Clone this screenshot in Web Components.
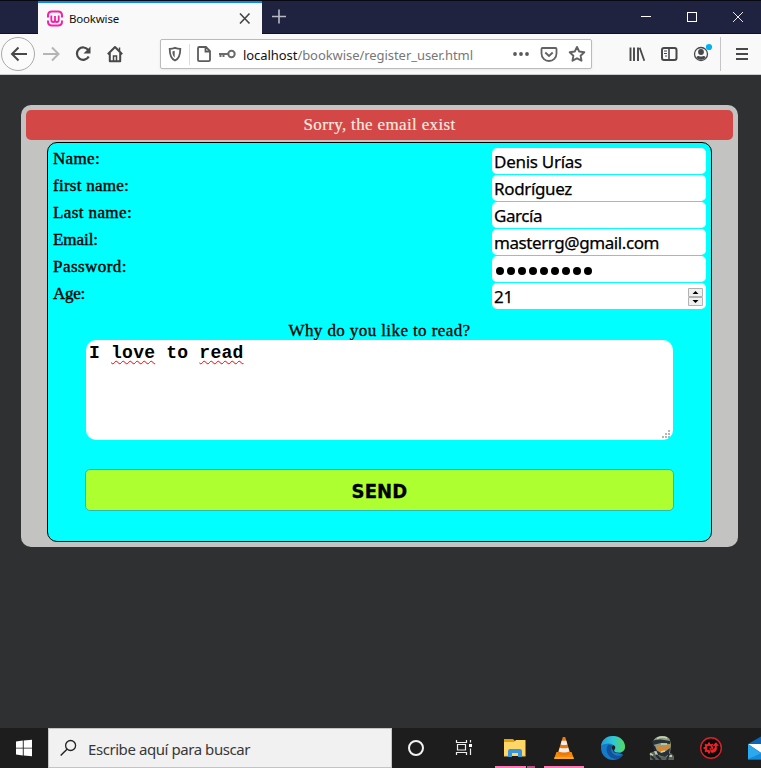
<!DOCTYPE html>
<html lang="en"><head><meta charset="utf-8"><title>Bookwise</title>
<style>html,body{margin:0;height:100%;overflow:hidden;background:#2f3032}</style></head><body>
<book-desktop></book-desktop>
<script>
const define=(name,html,ready)=>customElements.define(name,class extends HTMLElement{
 constructor(){super();this.attachShadow({mode:'open'}).innerHTML=html}
 connectedCallback(){if(ready)ready(this)}
});
const icons={
back:'<path d="M25 16H10.500M16.500 9.500L10 16l6.500 6.500" stroke-width="2"/>',
forward:'<path d="M8 16h15M17 9.500l6.500 6.500-6.500 6.500" stroke-width="2" stroke="#b5b5b7"/>',
reload:'<path d="M21.300 12.200A6.200 6.200 0 1 0 21.700 18.400" stroke-width="2.200"/><path d="M23.500 8.500v7h-7z" fill="#48484a" stroke="none"/>',
home:'<path d="M8.800 16.300L16 9l7.200 7.300M10.800 15v8.200h10.400V15" stroke-width="2" stroke-linejoin="round"/><path d="M14.500 23v-5h3v5M20.500 9.500v4" stroke-width="1.500"/>',
shield:'<path d="M16 9.800c2 .8 4 1.100 5.300 1.100 0 5.500-.7 9.500-5.300 11.600-4.600-2.100-5.300-6.100-5.300-11.600 1.300 0 3.300-.3 5.300-1.100z" stroke="#5c5c5e" stroke-width="1.800"/><path d="M15.700 12.700v6.800c-1.500-1-2.200-2.800-2.300-6z" fill="#5c5c5e" stroke="none"/>',
page:'<path d="M12 9h6l4 4v9a1.200 1.200 0 0 1-1.200 1.200H11.200A1.200 1.200 0 0 1 10 22V10.200A1.200 1.200 0 0 1 11.200 9zM17.500 9.500v4H22" stroke="#5c5c5e" stroke-width="1.800"/>',
key:'<g stroke="#6a6a6c"><circle cx="20.500" cy="16" r="3.200" stroke-width="2"/><path d="M17 16H8M9.500 16v3M12.500 16v3" stroke-width="2"/></g>',
dots:'<g fill="#59595b" stroke="none"><circle cx="10" cy="16" r="1.900"/><circle cx="16" cy="16" r="1.900"/><circle cx="22" cy="16" r="1.900"/></g>',
pocket:'<path d="M9.500 10h13a1 1 0 0 1 1 1v4.500a7.400 7.400 0 0 1-15 0V11a1 1 0 0 1 1-1z" stroke="#626264" stroke-width="1.800"/><path d="M12.300 14.500l3.700 3.400 3.700-3.400" stroke="#626264" stroke-width="1.900"/>',
star:'<path d="M16 8.900l2.200 4.600 5.100.7-3.700 3.500.9 5-4.500-2.400-4.500 2.400.9-5-3.700-3.500 5.100-.7z" stroke="#626264" stroke-width="1.900" stroke-linejoin="round"/>',
library:'<path d="M9.500 9.500v13.500M13 9.500v13.500M17 9.500v13.500" stroke-width="1.900"/><path d="M18.700 9.800l4.600 13" stroke-width="1.800"/>',
sidebar:'<rect x="9" y="10" width="14.500" height="12" rx="2" stroke-width="2"/><path d="M16 10v12" stroke-width="1.600"/><path d="M11 13h3M11 15.500h3M12 18h2" stroke-width="1"/>',
account:'<circle cx="16" cy="16" r="6.500" stroke-width="1.300"/><circle cx="16" cy="14" r="2.900" fill="#48484a" stroke="none"/><path d="M11.300 19.500q.5-1.400 2.500-1.400 2.200 1 4.400 0 2 0 2.500 1.400c-2.200 3-7.200 3-9.400 0z" fill="#48484a" stroke="none"/><circle cx="24" cy="9" r="3.100" fill="#00b3f4" stroke="none"/>',
menu:'<path d="M10 11h12M10 16h12M10 21h12" stroke-width="2"/>',
close:'<path d="M11 10.500l9.500 10M20.500 10.500L11 20.500" stroke="#444" stroke-width="1.600"/>',
plus:'<path d="M9 15.500h14M16 8.500v14" stroke="#b8b9c6" stroke-width="1.600"/>',
min:'<path d="M11 15.500h10" stroke="#fff" stroke-width="1"/>',
max:'<rect x="11.500" y="11.500" width="9" height="9" stroke="#fff" stroke-width="1"/>',
exit:'<path d="M11 11l10 10M21 11L11 21" stroke="#fff" stroke-width=".9"/>',
logo:'<path d="M9 14.500v-2q0-4 4-4h6q4 0 4 4v2M9 17.500v1q0 4 4 4h6q4 0 4-4v-1" stroke="#f321a9" stroke-width="2"/><path d="M12.300 12.500v4.500q0 2 1.900 2 1.800 0 1.800-2V13v4q0 2 1.800 2 1.900 0 1.900-2v-4.500" stroke="#f321a9" stroke-width="1.800"/>',
windows:'<path d="M8 9.600l6.800-1v7.100H8zM15.700 8.500L24 7.800v7.900h-8.300zM8 16.600h6.800v6.900L8 22.500zM15.700 16.600H24v7.600l-8.300-.7z" fill="#fff" stroke="none"/>',
search:'<circle cx="18.600" cy="13.500" r="5" stroke="#222" stroke-width="1.300"/><path d="M15 17.200l-6.300 6.400" stroke="#222" stroke-width="1.400"/>',
cortana:'<circle cx="16" cy="16" r="7" stroke="#f2f2f2" stroke-width="2"/>',
tasks:'<path d="M8.500 8v2.500h10V8M8.500 23v-2.500h10V23M9.500 12.500h8v5.500h-8zM22.500 8v2.500M22.500 16.500V23" stroke="#eee" stroke-width="1.200"/><path d="M21 12h3v3h-3z" fill="#fff" stroke="none"/>',
folder:'<path d="M5 7h9l2 2h10v15H5z" fill="#e2a208" stroke="none"/><path d="M5 10h10l2-2h9.500v16H5z" fill="#ffd767" stroke="none"/><path d="M9 25v-6q0-2 2-2h10q2 0 2 2v6h-4v-4h-6v4z" fill="#3a96dc" stroke="none"/><path d="M5 24h4M23 24h3.500" stroke="#eac055"/>',
vlc:'<path d="M8.500 20h15l2.500 7H6z" fill="#f68b09" stroke="none"/><path d="M14.800 5h2.400l5.300 17q-6.500 3-13 0z" fill="#ed780b" stroke="none"/><path d="M13.700 8.700h4.600l1.100 3.700q-3.400 1.200-6.800 0zM11.800 15.700q4.200 1.300 8.400 0l1.200 3.900q-5.400 2-10.800 0z" fill="#eee" stroke="none"/><path d="M6.500 26h19" stroke="#ffb329" stroke-width="1.500"/>',
edge:'<defs><linearGradient id="g"><stop stop-color="#229bd9"/><stop offset=".5" stop-color="#2fc7d6"/><stop offset="1" stop-color="#58d95a"/></linearGradient></defs><circle cx="16" cy="16" r="12" fill="#137bc9" stroke="none"/><path d="M28 15c0 4-3 6-7 6l6 2 3-4z" fill="#1d1d1d" stroke="none"/><path d="M4 14C5 7 10 4 16 4c7 0 12 5 12 10.500 0 4-3 6-7 6-3 0-5-1-4-2.500 2-3-1-6.500-5-6.500-4 0-6.500 1.200-8 2.500z" fill="url(#g)" stroke="none"/><path d="M11 13c-4 6 1 14 9 14 3-.5 5-2.500 6-4-8 2.500-14-2-11-9-1.500-1-3-1.500-4-1z" fill="#145198" stroke="none"/><path d="M16 18c-2-2-1.300-4 .5-5 2.500 1.500 2 3.500.7 5-.8 2 2 3 4.800 2.500-3 1.300-6 0-6-2.500z" fill="#202020" stroke="none"/>',
soldier:'<path d="M4 28v-7l5-2 8 3 8-1 3 3v4z" fill="#59634f" stroke="none"/><path d="M7 10q1-5 8-6 7-.5 9 4l1 5-1 8-4 4-7-1-4-6z" fill="#8f9d80" stroke="none"/><path d="M6 9q4-2 9-1.500l9 1.500v3l-9-1-8 2zM10 18l5 3 5-2 4-3-1 6-4 3-7-2z" fill="#273036" stroke="none"/><path d="M11 14l6 1 7-3v4l-4 1-4 3-5-2z" fill="#df8428" stroke="none"/><path d="M11 6.500q5-2.500 10-.5M15 12h6M19 19l-4 1" stroke="#c9d3b3" stroke-width="1.500"/><path d="M4 21.500l3 2M9 19l2 4M21 24h5" stroke="#c5cbbb" stroke-width="2"/><path d="M5 24l4 4M10 23l5 5M23 22l-2 6M8 14l2 5" stroke="#24283a" stroke-width="2"/>',
gear:'<circle cx="16" cy="16" r="10.300" fill="#080a0b" stroke="#d92228" stroke-width="1.400"/><circle cx="14" cy="16" r="3.200" stroke="#ed2329" stroke-width="2"/><path d="M14 10.500v2M14 19.500v2M8.500 16h2M10.100 12.200l1.500 1.500M10.100 19.800l1.500-1.500M17.900 12.200l-1.400 1.500" stroke="#ed2329" stroke-width="2"/><path d="M14 15.500h2v2q4 0 3.500-3.500H17l4-4 3.500 4H22q1 6-4 7h-2z" fill="#ed2329" stroke="#111" stroke-width=".5"/>',
mail:'<path d="M4 12L18 4h14v24H4z" fill="#0967b5" stroke="none"/><path d="M4 12h28v8L19 22z" fill="#fff" stroke="none"/><path d="M4 12l17 12-13 3H4z" fill="#2aa9ef" stroke="none"/><path d="M4 27l16-7 12 7z" fill="#158cdb" stroke="none"/>'
};
define('ui-icon','<style>:host{display:block;width:var(--size,32px);height:32px;flex:none}svg{display:block;width:32px;height:32px;margin-left:calc((var(--size,32px) - 32px)/2)}</style><span></span>',e=>{
 e.shadowRoot.querySelector('span').innerHTML=`<svg viewBox="0 0 32 32" fill="none" stroke="#48484a">${icons[e.getAttribute('name')]}</svg>`;
});
// A line of text whose letter spacing is adjusted to a given width.
define('fit-text','<style>:host{display:inline-block;white-space:pre;width:max-content}span{display:inline-block}</style><span><slot></slot></span>',e=>{
 const s=e.shadowRoot.querySelector('span'),n=[...e.textContent].length;
 s.style.letterSpacing=(+e.getAttribute('width')-s.getBoundingClientRect().width)/n+'px';
});
define('tab-strip',`<style>
:host{display:flex;height:34px;box-sizing:border-box;background:#20233f;border-top:1px solid #070812;border-bottom:1px solid #160c2c}
.tab{margin-left:38px;width:224px;height:33px;box-sizing:border-box;border-top:2px solid #0a84ff;background:#f9f9fa;display:flex;align-items:center;font:11.5px/16px "Noto Sans",sans-serif;color:#111}
.tab ui-icon:first-child{--size:32px;margin-left:1px}.tab fit-text{margin-left:-2px;margin-top:1px}.tab ui-icon:last-child{margin-left:auto;margin-right:1px;--size:32px}
.plus{margin-left:1px}.win{display:flex;margin-left:auto;--size:46px}
</style><div class="tab"><ui-icon name="logo"></ui-icon><fit-text width="50">Bookwise</fit-text><ui-icon name="close"></ui-icon></div><ui-icon class="plus" name="plus"></ui-icon><div class="win"><ui-icon name="min"></ui-icon><ui-icon name="max"></ui-icon><ui-icon name="exit"></ui-icon></div>`);
define('address-bar',`<style>
:host{display:flex;align-items:center;width:432px;height:30px;box-sizing:border-box;border:1px solid #bbb;border-radius:2px;background:#fff;box-shadow:0 1px 3px #0001;font:13px/20px "Noto Sans",sans-serif;color:#777;--size:28px}
i{width:1px;height:21px;background:#ddd}.key{--size:26px;margin-left:-4px}b{font-weight:400;color:#111}fit-text{margin:2px 0 0 3px}.dots{margin-left:auto}
</style><ui-icon name="shield"></ui-icon><i></i><ui-icon name="page"></ui-icon><ui-icon class="key" name="key"></ui-icon><fit-text width="230"><b>localhost</b>/bookwise/register_user.html</fit-text><ui-icon class="dots" name="dots"></ui-icon><ui-icon name="pocket"></ui-icon><ui-icon name="star"></ui-icon>`);
define('tool-bar',`<style>
:host{display:flex;align-items:center;height:41px;box-sizing:border-box;background:#f9f9fa;border-bottom:1px solid #ccc}
.back{width:34px;height:34px;box-sizing:border-box;border:1px solid #aaa;border-radius:50%;display:grid;place-items:center;margin:0 0 1px 1px;background:#fbfbfc}
address-bar{margin:0 29px}.sep{width:1px;height:34px;background:#c5c5c7;margin:0 5px 0 3px}
</style><div class="back"><ui-icon name="back"></ui-icon></div><ui-icon name="forward"></ui-icon><ui-icon name="reload"></ui-icon><ui-icon name="home"></ui-icon><address-bar></address-bar><ui-icon name="library"></ui-icon><ui-icon name="sidebar"></ui-icon><ui-icon name="account"></ui-icon><span class="sep"></span><ui-icon name="menu"></ui-icon>`);
define('form-row',`<style>
:host{display:flex;justify-content:space-between;height:27px}
.label{font:17px/22px "Liberation Serif",serif;-webkit-text-stroke:.4px #000}
.field{width:214px;height:26px;border-radius:5px;background:#fff;box-sizing:border-box;padding:1px 3px 0 2px;display:flex;justify-content:space-between;align-items:center;font:17px/25px "Noto Sans",sans-serif;-webkit-text-stroke:.25px #000}
</style><div class="label"><slot name="label"></slot></div><div class="field"><slot></slot><slot name="control"></slot></div>`);
define('number-stepper','<style>:host{display:block;width:15px;height:18px}svg{display:block}</style><svg width="15" height="18"><path d="M.5.500h14v8H.5zM.5 9.500h14v8H.5z" fill="#f0f0f0" stroke="#b2b2b2"/><path d="M4.500 6h6l-3-3zM4.500 12h6l-3 3z"/></svg>');
define('password-dots','<style>:host{display:flex;gap:3px;padding-left:2px;margin-top:2px}i{width:8px;height:8px;border-radius:50%;background:#000}</style>'+'<i></i>'.repeat(9));
define('book-form',`<style>
:host{display:flex;flex-direction:column;align-items:center;width:665px;height:400px;box-sizing:border-box;background:#0ff;border:1px solid #000;border-radius:10px;padding:5px}
form-row{width:653px}.q{font:17px/21px "Liberation Serif",serif;height:21px;margin:9px 0 0;-webkit-text-stroke:.3px #000}
.q fit-text{margin-top:1px}
.area{width:587px;height:100px;box-sizing:border-box;border-radius:10px;background:#fff;padding:2px 3px;display:flex;justify-content:space-between;font:bold 18px/22px "Liberation Mono",monospace}
.area svg{align-self:flex-end}u{text-decoration:underline wavy red 1.3px;text-underline-offset:2px;text-decoration-skip-ink:none}
button{width:589px;height:42px;margin:29px 0 0;border:1px solid #27bdb4;border-radius:5px;background:#adff2f;color:#000;font:bold 20px "DejaVu Sans Condensed","DejaVu Sans",sans-serif;font-stretch:condensed;padding:1px 0 0;-webkit-text-stroke:.3px #000}
</style>
<form-row><fit-text slot="label" width="47">Name:</fit-text><fit-text width="88">Denis Urías</fit-text></form-row>
<form-row><fit-text slot="label" width="76">first name:</fit-text><fit-text width="78">Rodríguez</fit-text></form-row>
<form-row><fit-text slot="label" width="79">Last name:</fit-text><fit-text width="48">García</fit-text></form-row>
<form-row><fit-text slot="label" width="45">Email:</fit-text><fit-text width="165">masterrg@gmail.com</fit-text></form-row>
<form-row><fit-text slot="label" width="74">Password:</fit-text><password-dots></password-dots></form-row>
<form-row><fit-text slot="label" width="32">Age:</fit-text><fit-text width="19">21</fit-text><number-stepper slot="control"></number-stepper></form-row>
<div class="q"><fit-text width="182">Why do you like to read?</fit-text></div>
<div class="area"><fit-text width="154.500">I <u>love</u> to <u>read</u></fit-text><svg width="8" height="8" fill="#b6b6b6"><path d="M6 0h2v2H6zM3 3h2v2H3zM6 3h2v2H6zM0 6h2v2H0zM3 6h2v2H3zM6 6h2v2H6z"/></svg></div>
<button type="button"><fit-text width="56">SEND</fit-text></button>`);
define('book-page',`<style>
:host{display:block;height:653px;box-sizing:border-box;padding:30px 23px 0 21px;background:#2f3032}
main{width:717px;height:442px;box-sizing:border-box;background:#c3c3c1;border-radius:10px;padding:5px;display:flex;flex-direction:column;align-items:center;gap:2px}
.alert{width:707px;height:30px;border-radius:5px;background:#d34846;color:#f8ece2;text-align:center;font:17px/30px "Liberation Serif",serif;-webkit-text-stroke:.15px #f8ece2}
</style><main><div class="alert"><fit-text width="152">Sorry, the email exist</fit-text></div><book-form></book-form></main>`);
define('task-item',`<style>:host{display:flex;flex-direction:column;width:49px;height:40px;align-items:center;padding-top:4px;box-sizing:border-box}.bar{width:40px;height:2px;margin-top:2px}:host([active]) .bar{background:#ff7ab5}:host([group]) .bar{background:linear-gradient(90deg,#ff7ab5 31px,#1d1d1d 31px 32px,#b55385 32px)}</style><slot></slot><span class="bar"></span>`);
define('task-bar',`<style>
:host{display:flex;height:40px;background:#1d1d1d;overflow:hidden}
.search{flex:none;width:344px;height:40px;box-sizing:border-box;background:#f1f1f1;border:1px solid #c4c4c4;display:flex;align-items:center;color:#383838;font:15px/24px "Noto Sans",sans-serif;padding-left:3px}.search fit-text{margin-left:4px;margin-top:2px}
task-item{flex:none}.s{width:48px}.folder{margin-left:2px}
</style><task-item class="s"><ui-icon name="windows"></ui-icon></task-item><div class="search"><ui-icon name="search"></ui-icon><fit-text width="162">Escribe aquí para buscar</fit-text></div>
<task-item class="s"><ui-icon name="cortana"></ui-icon></task-item><task-item class="s"><ui-icon name="tasks"></ui-icon></task-item><task-item class="folder" active group><ui-icon name="folder"></ui-icon></task-item><task-item active><ui-icon name="vlc"></ui-icon></task-item><task-item><ui-icon name="edge"></ui-icon></task-item><task-item><ui-icon name="soldier"></ui-icon></task-item><task-item><ui-icon name="gear"></ui-icon></task-item><task-item><ui-icon name="mail"></ui-icon></task-item>`);
define('book-desktop','<style>:host{display:flex;flex-direction:column;width:761px;height:768px;overflow:hidden}</style><tab-strip></tab-strip><tool-bar></tool-bar><book-page></book-page><task-bar></task-bar>');
</script></body></html>
